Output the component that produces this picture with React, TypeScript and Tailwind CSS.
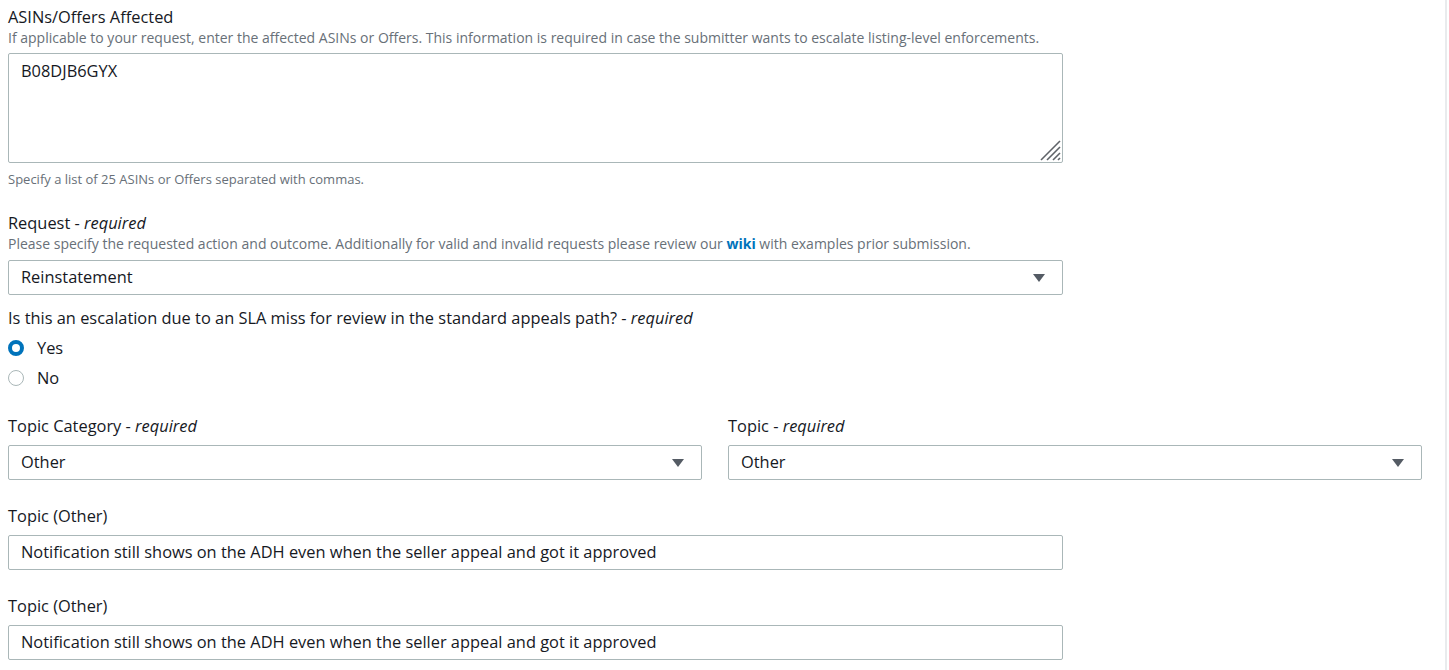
import { useState } from "react";

const font = { fontFamily: '"Open Sans", "Liberation Sans", Arial, sans-serif' };

function Caret() {
  return (
    <svg width="14" height="10" viewBox="0 0 14 10" className="shrink-0">
      <path d="M1 1h12L7 9z" fill="#545b64" />
    </svg>
  );
}

function Label({ text, required }: { text: string; required?: boolean }) {
  return (
    <div className="text-[16.4px] leading-[22px] text-[#16191f]">
      {text}
      {required && (
        <>
          {" - "}
          <i>required</i>
        </>
      )}
    </div>
  );
}

function Select({ value }: { value: string }) {
  return (
    <div className="flex h-[35px] items-center justify-between rounded-[2px] border border-[#aab7b8] bg-white pl-3 pr-[16px] text-[16.4px] text-[#16191f]">
      <span className="pb-[1px]">{value}</span>
      <Caret />
    </div>
  );
}

function TextBox({ value }: { value: string }) {
  return (
    <div className="flex h-[35px] w-[1055px] items-center rounded-[2px] border border-[#aab7b8] bg-white px-3 pb-[1px] text-[16.4px] text-[#16191f]">
      {value}
    </div>
  );
}

function Radio({ label, checked, onClick }: { label: string; checked: boolean; onClick: () => void }) {
  return (
    <button type="button" onClick={onClick} className="flex h-[30px] items-center gap-[13px] text-left">
      {checked ? (
        <span className="h-4 w-4 rounded-full border-[4px] border-[#0073bb] bg-white" />
      ) : (
        <span className="h-4 w-4 rounded-full border-[1.5px] border-[#aab7b8] bg-white" />
      )}
      <span className="text-[16.4px] text-[#16191f]">{label}</span>
    </button>
  );
}

export default function App() {
  const [sla, setSla] = useState("yes");
  const note = "Notification still shows on the ADH even when the seller appeal and got it approved";

  return (
    <div className="min-h-[670px] w-[1447px] border-r-2 border-[#e9ebed] bg-white" style={font}>
      <div className="px-2 pt-[6px]">
        {/* affected listings */}
        <Label text="ASINs/Offers Affected" />
        <div className="text-[14px] leading-[20px] text-[#687078]">
          If applicable to your request, enter the affected ASINs or Offers. This information is required in case the submitter wants to escalate listing-level enforcements.
        </div>
        <div className="relative mt-[5px] h-[110px] w-[1055px] rounded-[2px] border border-[#aab7b8] bg-white">
          <div className="px-3 pt-[6px] text-[16.4px] leading-[22px] text-[#16191f]">B08DJB6GYX</div>
          <svg width="22" height="22" viewBox="0 0 22 22" className="absolute bottom-[1px] right-[1px]">
            <g stroke="#5f6368" strokeWidth="1.6">
              <path d="M2 21 21 2" />
              <path d="M8 21 21 8" />
              <path d="M14 21 21 14" />
              <path d="M19 21 21 19" />
            </g>
          </svg>
        </div>
        <div className="mt-[6px] text-[13px] leading-[20px] text-[#687078]">
          Specify a list of 25 ASINs or Offers separated with commas.
        </div>

        {/* request type */}
        <div className="mt-[23px]">
          <Label text="Request" required />
          <div className="text-[14px] leading-[20px] text-[#687078]">
            Please specify the requested action and outcome. Additionally for valid and invalid requests please review our{" "}
            <a className="font-bold text-[#0073bb]">wiki</a> with examples prior submission.
          </div>
          <div className="mt-[6px] w-[1055px]">
            <Select value="Reinstatement" />
          </div>
        </div>

        {/* SLA escalation */}
        <div className="mt-[12px]">
          <Label text="Is this an escalation due to an SLA miss for review in the standard appeals path?" required />
          <div className="mt-[4px] flex flex-col">
            <Radio label="Yes" checked={sla === "yes"} onClick={() => setSla("yes")} />
            <Radio label="No" checked={sla === "no"} onClick={() => setSla("no")} />
          </div>
        </div>

        {/* topic */}
        <div className="mt-[22px] grid w-[1414px] grid-cols-2 gap-x-[26px]">
          <div>
            <Label text="Topic Category" required />
            <div className="mt-[8px]">
              <Select value="Other" />
            </div>
          </div>
          <div>
            <Label text="Topic" required />
            <div className="mt-[8px]">
              <Select value="Other" />
            </div>
          </div>
        </div>

        <div className="mt-[25px]">
          <Label text="Topic (Other)" />
          <div className="mt-[8px]">
            <TextBox value={note} />
          </div>
        </div>
        <div className="mt-[25px]">
          <Label text="Topic (Other)" />
          <div className="mt-[8px]">
            <TextBox value={note} />
          </div>
        </div>
      </div>
    </div>
  );
}
